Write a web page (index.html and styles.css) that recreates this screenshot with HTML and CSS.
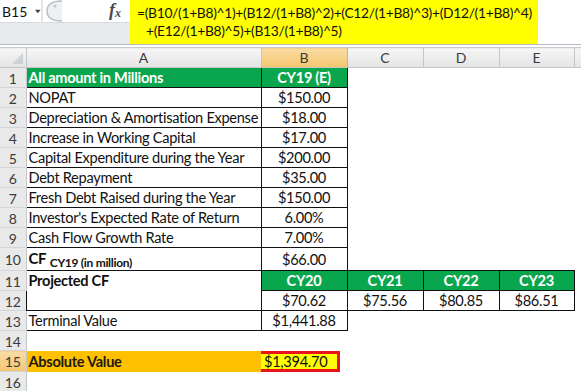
FILE: index.html
```html
<!DOCTYPE html>
<html lang="en">

<head>
    <meta charset="UTF-8">
    <meta name="viewport" content="width=device-width, initial-scale=1.0">
    <title>Absolute Value</title>
    <link rel="stylesheet" href="styles.css">
</head>

<body>
    <div id="formulaBar">
        <div class="leftPanel">
            <div class="topStrip">
                <div class="nameBox">
                    <span>B15</span>
                    <svg class="caret" width="8" height="5" viewBox="0 0 8 5">
                        <path d="M0 0 L8 0 L4 5 Z" fill="#444" />
                    </svg>
                </div>
                <svg class="handle" width="20" height="22" viewBox="0 0 20 22">
                    <path d="M18 1 C8 1 3 5 3 11 C3 17 8 21 18 21" fill="#eef0f2" stroke="#b9bec5" stroke-width="1.5" />
                    <circle cx="11" cy="6" r="1.5" fill="#c3c7cc" />
                </svg>
                <span class="fx">f<sub>x</sub></span>
            </div>
        </div>
        <div class="formula">
            <div>=(B10/(1+B8)^1)+(B12/(1+B8)^2)+(C12/(1+B8)^3)+(D12/(1+B8)^4)</div>
            <div class="wrapLine">+(E12/(1+B8)^5)+(B13/(1+B8)^5)</div>
        </div>
        <div class="rest"></div>
    </div>

    <table id="sheet">
        <colgroup>
            <col class="rowHeadCol">
            <col class="colA">
            <col class="colB">
            <col class="colC">
            <col class="colD">
            <col class="colE">
            <col class="colF">
        </colgroup>
        <tr class="colHeads">
            <th class="corner"><span class="cornerMark"></span></th>
            <th>A</th>
            <th class="active">B</th>
            <th>C</th>
            <th>D</th>
            <th>E</th>
            <th class="last"></th>
        </tr>
        <tr>
            <th class="rowHead">1</th>
            <td class="box green">All amount in Millions</td>
            <td class="box green center">CY19 (E)</td>
            <td></td><td></td><td></td><td></td>
        </tr>
        <tr>
            <th class="rowHead">2</th>
            <td class="box">NOPAT</td>
            <td class="box center">$150.00</td>
            <td></td><td></td><td></td><td></td>
        </tr>
        <tr>
            <th class="rowHead">3</th>
            <td class="box">Depreciation &amp; Amortisation Expense</td>
            <td class="box center">$18.00</td>
            <td></td><td></td><td></td><td></td>
        </tr>
        <tr>
            <th class="rowHead">4</th>
            <td class="box">Increase in Working Capital</td>
            <td class="box center">$17.00</td>
            <td></td><td></td><td></td><td></td>
        </tr>
        <tr>
            <th class="rowHead">5</th>
            <td class="box">Capital Expenditure during the Year</td>
            <td class="box center">$200.00</td>
            <td></td><td></td><td></td><td></td>
        </tr>
        <tr>
            <th class="rowHead">6</th>
            <td class="box">Debt Repayment</td>
            <td class="box center">$35.00</td>
            <td></td><td></td><td></td><td></td>
        </tr>
        <tr>
            <th class="rowHead">7</th>
            <td class="box">Fresh Debt Raised during the Year</td>
            <td class="box center">$150.00</td>
            <td></td><td></td><td></td><td></td>
        </tr>
        <tr>
            <th class="rowHead">8</th>
            <td class="box">Investor's Expected Rate of Return</td>
            <td class="box center">6.00%</td>
            <td></td><td></td><td></td><td></td>
        </tr>
        <tr>
            <th class="rowHead">9</th>
            <td class="box">Cash Flow Growth Rate</td>
            <td class="box center">7.00%</td>
            <td></td><td></td><td></td><td></td>
        </tr>
        <tr class="tall">
            <th class="rowHead">10</th>
            <td class="box"><b>CF</b> <sub>CY19 (in million)</sub></td>
            <td class="box center">$66.00</td>
            <td></td><td></td><td></td><td></td>
        </tr>
        <tr>
            <th class="rowHead">11</th>
            <td class="box bold top" rowspan="2">Projected CF</td>
            <td class="box green center">CY20</td>
            <td class="box green center">CY21</td>
            <td class="box green center">CY22</td>
            <td class="box green center">CY23</td>
            <td></td>
        </tr>
        <tr>
            <th class="rowHead">12</th>
            <td class="box center">$70.62</td>
            <td class="box center">$75.56</td>
            <td class="box center">$80.85</td>
            <td class="box center">$86.51</td>
            <td></td>
        </tr>
        <tr>
            <th class="rowHead">13</th>
            <td class="box">Terminal Value</td>
            <td class="box center">$1,441.88</td>
            <td></td><td></td><td></td><td></td>
        </tr>
        <tr>
            <th class="rowHead">14</th>
            <td></td><td></td><td></td><td></td><td></td><td></td>
        </tr>
        <tr>
            <th class="rowHead active">15</th>
            <td class="orange">Absolute Value</td>
            <td class="selCell"><div class="highlight">$1,394.70</div></td>
            <td></td><td></td><td></td><td></td>
        </tr>
        <tr>
            <th class="rowHead">16</th>
            <td></td><td></td><td></td><td></td><td></td><td></td>
        </tr>
    </table>
</body>

</html>
```

FILE: styles.css
```css
* {
    margin: 0;
    padding: 0;
    box-sizing: border-box;
}

body {
    width: 581px;
    height: 391px;
    overflow: hidden;
    background-color: white;
    font-family: "Lato", "Liberation Sans", sans-serif;
    color: #111;
}

/* formula bar */

#formulaBar {
    display: flex;
    height: 45px;
    border-bottom: 1px solid #b4bac2;
}

.leftPanel {
    width: 130px;
    background-color: #e8eaed;
}

.topStrip {
    display: flex;
    align-items: center;
    height: 23px;
    background-color: white;
    border-bottom: 1px solid #d6d9dd;
}

.nameBox {
    display: flex;
    align-items: center;
    width: 43px;
    height: 23px;
    padding-left: 2px;
    font-size: 14px;
    border-right: 2px solid #e3e5e8;
}

.nameBox .caret {
    margin-left: 8px;
}

.handle {
    margin-left: 1px;
}

.fx {
    margin-left: 45px;
    font-family: "Liberation Serif", serif;
    font-style: italic;
    font-weight: bold;
    font-size: 18px;
    line-height: 18px;
    color: #4a4a4a;
}

.fx sub {
    font-size: 12px;
    vertical-align: -1px;
}

.formula {
    width: 408px;
    background-color: #ffff00;
    padding: 4px 0 0 7px;
    font-size: 13.8px;
    letter-spacing: -0.3px;
    line-height: 18px;
    color: #111;
}

.wrapLine {
    padding-left: 9px;
}

.rest {
    flex: 1;
    background-color: white;
}

/* sheet */

#sheet {
    border-collapse: collapse;
    table-layout: fixed;
    width: 590px;
    margin-top: 2px;
    border-top: 1px solid #c8ccd1;
}

.rowHeadCol { width: 26px; }
.colA { width: 235px; }
.colB { width: 86px; }
.colC { width: 76px; }
.colD { width: 76px; }
.colE { width: 75px; }
.colF { width: 16px; }

tr {
    height: 20px;
}

tr.tall {
    height: 23px;
}

tr.colHeads {
    height: 20px;
}

th {
    font-weight: normal;
    font-size: 14px;
    color: #3b3b3b;
}

.colHeads th {
    background: linear-gradient(#f6f6f6, #e4e4e4);
    border-right: 1px solid #c4c6c9;
    border-bottom: 1px solid #c4c6c9;
}

.colHeads th.active {
    background: linear-gradient(#f9dca4, #f5c66f);
    border-right-color: #d9b26a;
}

.colHeads th.last {
    border-right: none;
}

.corner {
    position: relative;
}

.cornerMark {
    position: absolute;
    right: 3px;
    bottom: 3px;
    width: 0;
    height: 0;
    border-left: 11px solid transparent;
    border-bottom: 11px solid #cfd2d5;
}

.rowHead {
    background-color: #e9e9e9;
    border-right: 1px solid #c4c6c9;
    border-bottom: 1px solid #d3d5d8;
    text-align: center;
    padding-top: 1px;
}

.rowHead.active {
    background: linear-gradient(#f9dca4, #f5c66f);
}

td {
    font-size: 14.6px;
    letter-spacing: -0.3px;
    padding: 0 2px;
    white-space: nowrap;
    overflow: hidden;
    vertical-align: middle;
}

td.box {
    border: 1px solid #111;
}

td.center {
    text-align: center;
}

td.green {
    background-color: #0aa64e;
    color: white;
    font-weight: bold;
}

td.bold {
    font-weight: bold;
}

td.top {
    vertical-align: top;
    padding-top: 1px;
}

td b {
    font-size: 15px;
}

td sub {
    font-size: 12px;
    font-weight: bold;
    vertical-align: -3px;
}

td.orange {
    background-color: #ffc000;
    font-weight: bold;
    color: #1e1a10;
}

td.selCell {
    padding: 0;
}

.highlight {
    width: 82px;
    height: 21px;
    margin-left: -3px;
    padding-left: 3px;
    background-color: #ffff00;
    border: 3px solid #e8141a;
    line-height: 15px;
}
```
